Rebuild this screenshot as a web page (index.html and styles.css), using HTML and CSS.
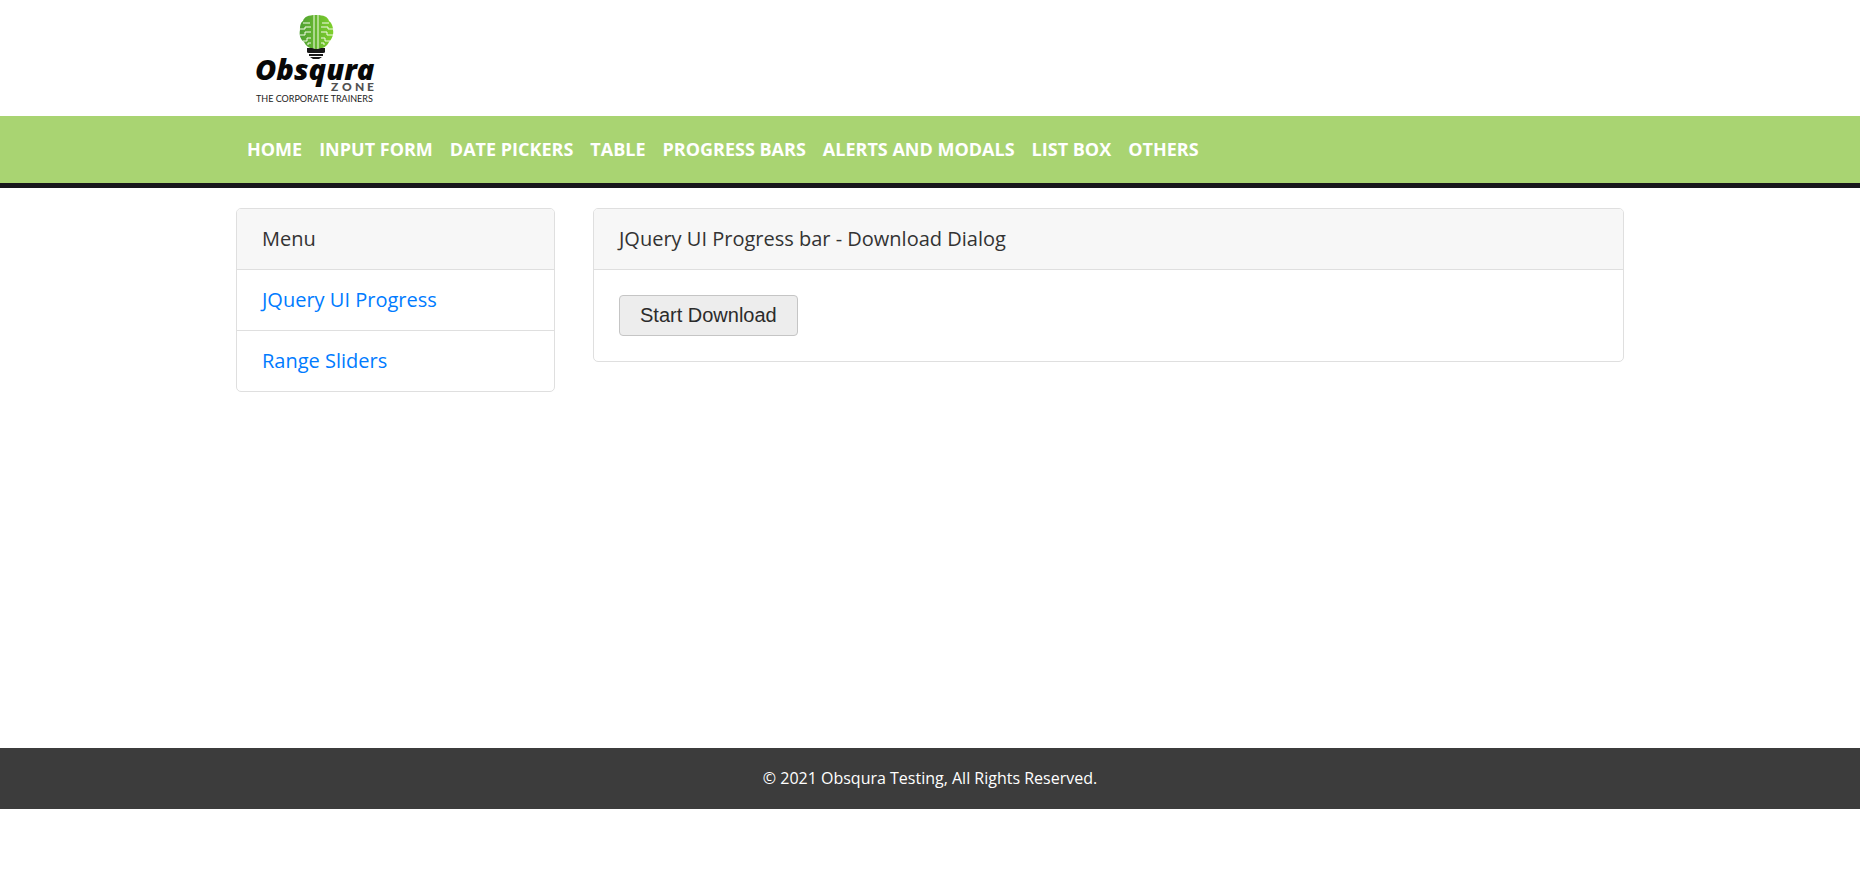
FILE: index.html
```html
<!DOCTYPE html>
<html lang="en">
<head>
<meta charset="utf-8">
<meta name="viewport" content="width=device-width, initial-scale=1">
<title>Obsqura Testing</title>
<link rel="stylesheet" href="styles.css">
</head>
<body>
<header>
  <div class="container brand">
    <a class="logo" href="#" aria-label="Obsqura Zone">
      <svg width="128" height="92" viewBox="0 0 128 92">
        <defs>
          <linearGradient id="leaf" x1="0" y1="0" x2="1" y2="0">
            <stop offset="0" stop-color="#4fa033"/>
            <stop offset="1" stop-color="#7fd02c"/>
          </linearGradient>
        </defs>
        <path fill="url(#leaf)" d="M64 3C56 3 52 5 51 9C48 11 48 15 48 18C47 22 48 27 52 30C54 34 57 36 61 37H67C72 36 75 34 77 30C80 27 82 22 81 18C81 15 80 11 77 9C76 5 72 3 64 3Z"/>
        <g fill="none" stroke="#f4fbe9" stroke-width="1">
          <path d="M62 3V37M66 3V37"/>
          <path d="M51 11H58M47 17H53V15H59M48 23H53V20H59M51 29H55V26H59M56 33V31H59"/>
          <path d="M77 11H70M82 17H76V15H69M81 23H75V20H69M78 29H73V26H69M72 33V31H69"/>
        </g>
        <path fill="#181818" d="M55 36H60L63 37H66L69 36H73V40Q73 41 71 41H57Q55 41 55 40ZM57 42H71V44H57ZM58 45H70L67 47H61Z"/>
        <text class="logo-name" x="3" y="68">Obsqura</text>
        <text class="logo-zone" x="79" y="79"><tspan>Z</tspan><tspan x="90">O</tspan><tspan x="103">N</tspan><tspan x="115">E</tspan></text>
        <text class="logo-tag" x="4" y="90">THE CORPORATE TRAINERS</text>
      </svg>
    </a>
  </div>
  <nav class="navbar">
    <div class="container">
      <ul class="nav-list">
        <li><a href="#">HOME</a></li>
        <li><a href="#">INPUT FORM</a></li>
        <li><a href="#">DATE PICKERS</a></li>
        <li><a href="#">TABLE</a></li>
        <li><a href="#">PROGRESS BARS</a></li>
        <li><a href="#">ALERTS AND MODALS</a></li>
        <li><a href="#">LIST BOX</a></li>
        <li><a href="#">OTHERS</a></li>
      </ul>
    </div>
  </nav>
</header>
<main class="container columns">
  <aside class="card">
    <div class="card-header">Menu</div>
    <ul class="menu">
      <li><a href="#">JQuery UI Progress</a></li>
      <li><a href="#">Range Sliders</a></li>
    </ul>
  </aside>
  <section class="card">
    <div class="card-header">JQuery UI Progress bar - Download Dialog</div>
    <div class="card-body"><button class="download" type="button">Start Download</button></div>
  </section>
</main>
<footer class="footer">© 2021 Obsqura Testing, All Rights Reserved.</footer>
</body>
</html>
```
FILE: styles.css
```css
* { box-sizing: border-box; }

body {
  margin: 0;
  background: #fff;
  color: #333;
  font-family: "Open Sans", sans-serif;
  font-size: 20px;
  line-height: 30px;
}

a { color: #007bff; text-decoration: none; }
ul { margin: 0; padding: 0; list-style: none; }

.container {
  width: 100%;
  max-width: 1426px;
  margin: 0 auto;
  padding: 0 19px;
}

.brand { padding-top: 12px; padding-bottom: 12px; }
.logo { display: block; width: 128px; margin-left: 16px; }
.logo svg { display: block; }
.logo-name { font: italic 800 29px "Open Sans", sans-serif; fill: #080808; }
.logo-zone { font: 900 12px Lato, sans-serif; fill: #505050; }
.logo-tag { font: 9px Lato, sans-serif; fill: #222; }

.navbar {
  padding: 18px 0 19px;
  background: #a9d472;
  border-bottom: 5px solid #17161b;
}
.nav-list { display: flex; flex-wrap: wrap; gap: 0 17px; padding: 0 11px; }
.nav-list a { color: #fff; font-size: 18px; font-weight: 700; }

.columns {
  display: grid;
  grid-template-columns: 319px 1fr;
  gap: 38px;
  align-items: start;
  min-height: 560px;
  padding-top: 20px;
}
.card {
  overflow: hidden;
  background: #fff;
  border: 1px solid #dfdfdf;
  border-radius: 5px;
}
.card-header {
  padding: 15px 25px;
  background: #f7f7f7;
  border-bottom: 1px solid #dfdfdf;
}
.menu li { padding: 15px 25px; }
.menu li + li { border-top: 1px solid #dfdfdf; }
.card-body { padding: 25px; }
.download {
  display: block;
  padding: 8px 20px;
  background: #ededed;
  border: 1px solid #c5c5c5;
  border-radius: 4px;
  color: #2b2b2b;
  font: 20px/23px "Liberation Sans", Arial, sans-serif;
}

.footer {
  padding: 15px;
  background: #3c3c3c;
  color: #fff;
  font-size: 16px;
  line-height: 31px;
  text-align: center;
}

@media (max-width: 900px) {
  .columns { grid-template-columns: 1fr; }
}
```
